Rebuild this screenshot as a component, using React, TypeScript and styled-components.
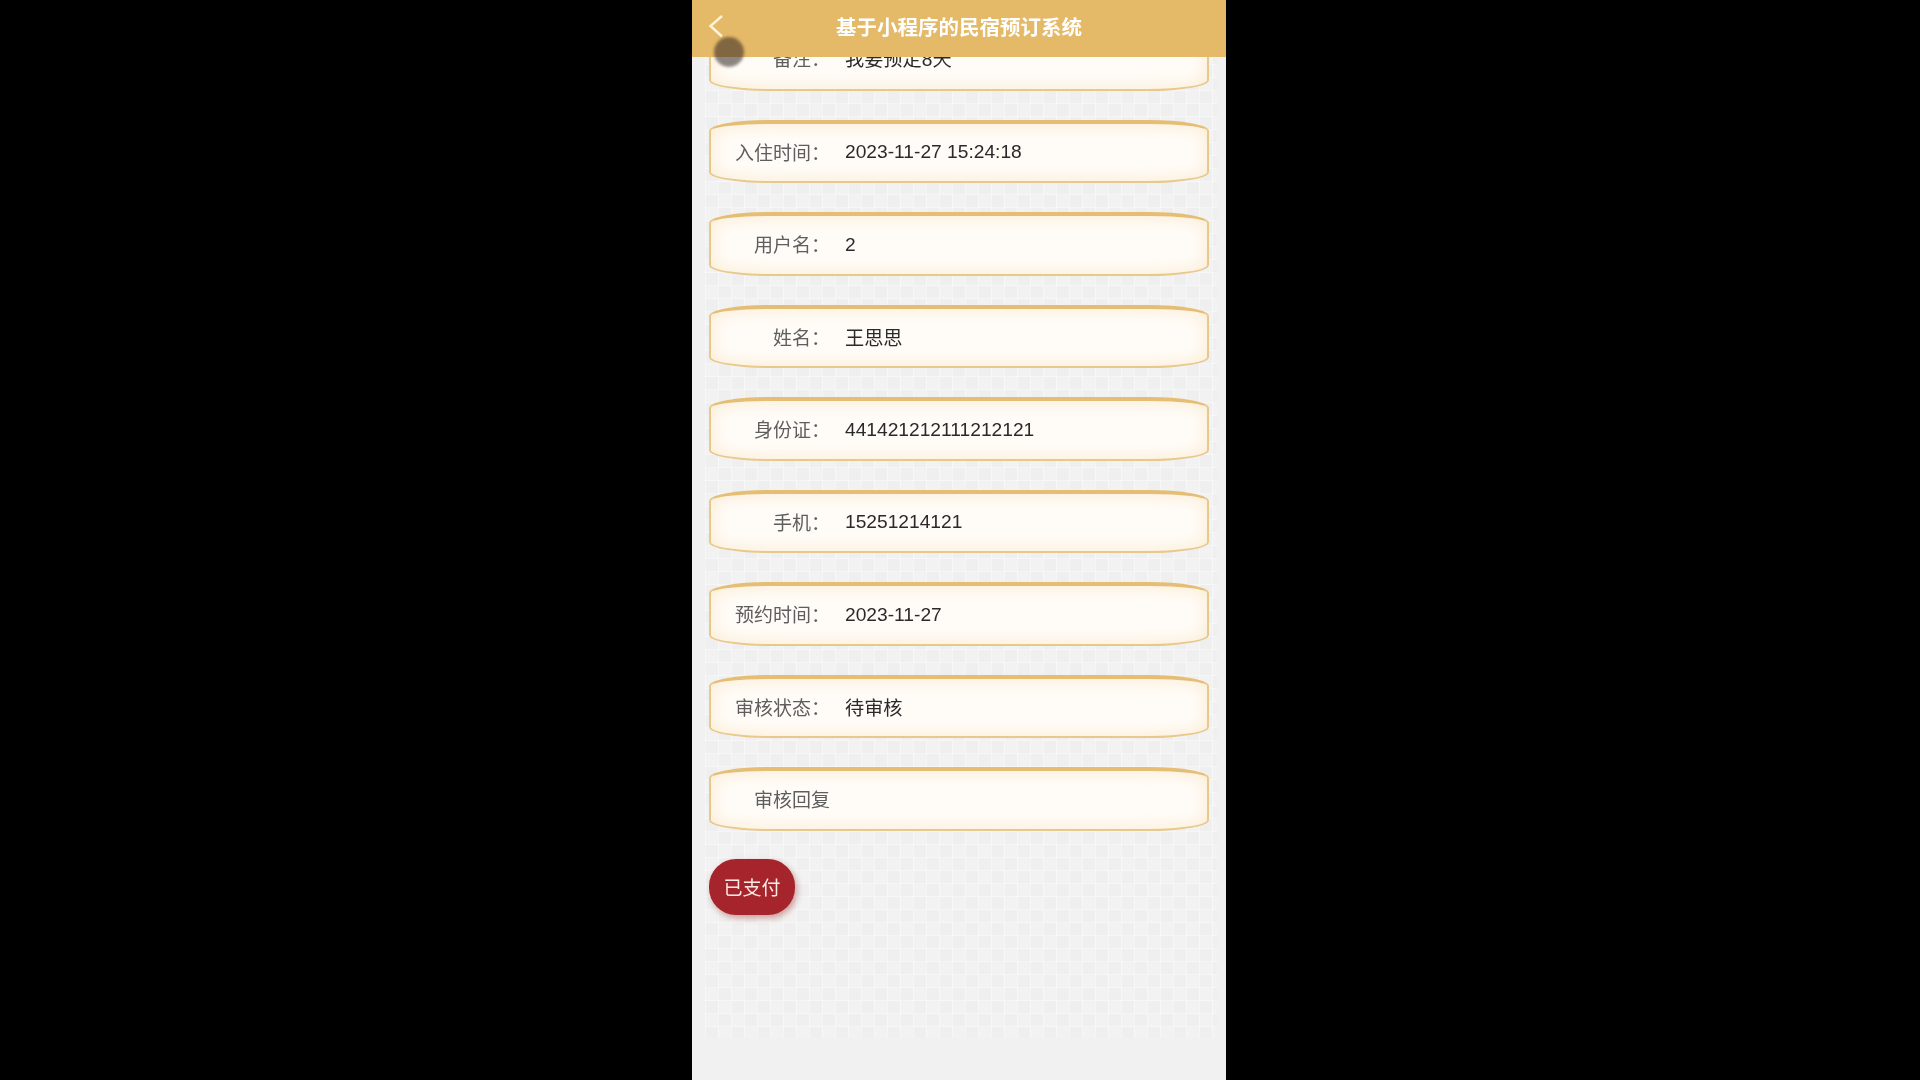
import React from "react";
import styled, { createGlobalStyle } from "styled-components";

const Global = createGlobalStyle`
  html, body { margin: 0; padding: 0; background: #000; height: 100%; }
  #root { height: 100%; }
`;

const Stage = styled.div`
  width: 1920px;
  height: 1080px;
  background: #000;
  display: flex;
  justify-content: center;
  overflow: hidden;
  font-family: "Liberation Sans", "Noto Sans CJK SC", sans-serif;
`;

const Phone = styled.div`
  position: relative;
  width: 534px;
  height: 1080px;
  margin-left: -2px;
  background: #f1f1f1;
  overflow: hidden;
  filter: blur(0.45px);
`;

const Header = styled.header`
  position: absolute;
  top: 0;
  left: 0;
  right: 0;
  height: 57px;
  padding-bottom: 5px;
  box-sizing: border-box;
  background: #e4b968;
  display: flex;
  align-items: center;
  justify-content: center;
  color: #fff;
  font-size: 20.5px;
  font-weight: 700;
  z-index: 2;
`;

const Back = styled.svg`
  position: absolute;
  left: 16px;
  top: 15px;
  width: 16px;
  height: 24px;
`;

const TouchDot = styled.div`
  position: absolute;
  left: 22px;
  top: 37px;
  width: 30px;
  height: 30px;
  border-radius: 50%;
  background: rgba(50, 40, 35, 0.56);
  filter: blur(1.5px);
  z-index: 3;
`;

const Scroll = styled.main`
  width: 512px;
  height: 1038px;
  margin-left: 13px;
  box-sizing: border-box;
  padding: 27px 8px 0 4px;
  display: flex;
  flex-direction: column;
  gap: 29px;
  background-color: #f0f0f0;
  background-image:
    repeating-linear-gradient(0deg, rgba(255, 255, 255, 0.4) 0 1px, transparent 1px 13px),
    repeating-linear-gradient(90deg, rgba(255, 255, 255, 0.4) 0 1px, transparent 1px 13px),
    conic-gradient(#efefef 25%, #f2f2f2 0 50%, #efefef 0 75%, #f2f2f2 0);
  background-size: 13px 13px, 13px 13px, 26px 26px;
`;

const Row = styled.div`
  flex: none;
  height: 63.5px;
  box-sizing: border-box;
  display: flex;
  align-items: center;
  border-style: solid;
  border-color: #e6bd74 #e9c88c #e9c88c;
  border-width: 4px 2px 2px 2px;
  border-radius: 60px / 11px;
  background: #fffcf8;
  box-shadow: inset 0 0 18px rgba(248, 226, 186, 0.7);

  &:first-child {
    padding-bottom: 3px;
  }
`;

const Label = styled.span<{ $free?: boolean }>`
  flex: none;
  box-sizing: border-box;
  width: ${(p) => (p.$free ? "auto" : "119px")};
  padding-left: ${(p) => (p.$free ? "43px" : "0")};
  padding-bottom: 2px;
  text-align: ${(p) => (p.$free ? "left" : "right")};
  font-size: 19px;
  color: #5e5e5e;
`;

const Value = styled.span`
  margin-left: 15px;
  font-size: 19.2px;
  color: #2a2a2a;
`;

const PayButton = styled.button`
  flex: none;
  align-self: flex-start;
  width: 86px;
  height: 56px;
  margin-top: -1px;
  border: 0;
  border-radius: 27px;
  background: #a6242b;
  color: #fbe9e4;
  font: inherit;
  font-size: 19px;
  box-shadow: 2px 3px 6px rgba(160, 50, 50, 0.45);
`;

const rows = [
  ["备注：", "我要预定8天"],
  ["入住时间：", "2023-11-27 15:24:18"],
  ["用户名：", "2"],
  ["姓名：", "王思思"],
  ["身份证：", "441421212111212121"],
  ["手机：", "15251214121"],
  ["预约时间：", "2023-11-27"],
  ["审核状态：", "待审核"],
];

export default function App() {
  return (
    <Stage>
      <Global />
      <Phone>
        <Header>
          <Back viewBox="0 0 16 24" fill="none" stroke="#fff3da" strokeWidth="2.4">
            <path d="M14 1 L2.5 11 L14 21.5" />
          </Back>
          基于小程序的民宿预订系统
        </Header>
        <TouchDot />
        <Scroll>
          {rows.map(([k, v]) => (
            <Row key={k}>
              <Label>{k}</Label>
              <Value>{v}</Value>
            </Row>
          ))}
          <Row>
            <Label $free>审核回复</Label>
          </Row>
          <PayButton>已支付</PayButton>
        </Scroll>
      </Phone>
    </Stage>
  );
}
